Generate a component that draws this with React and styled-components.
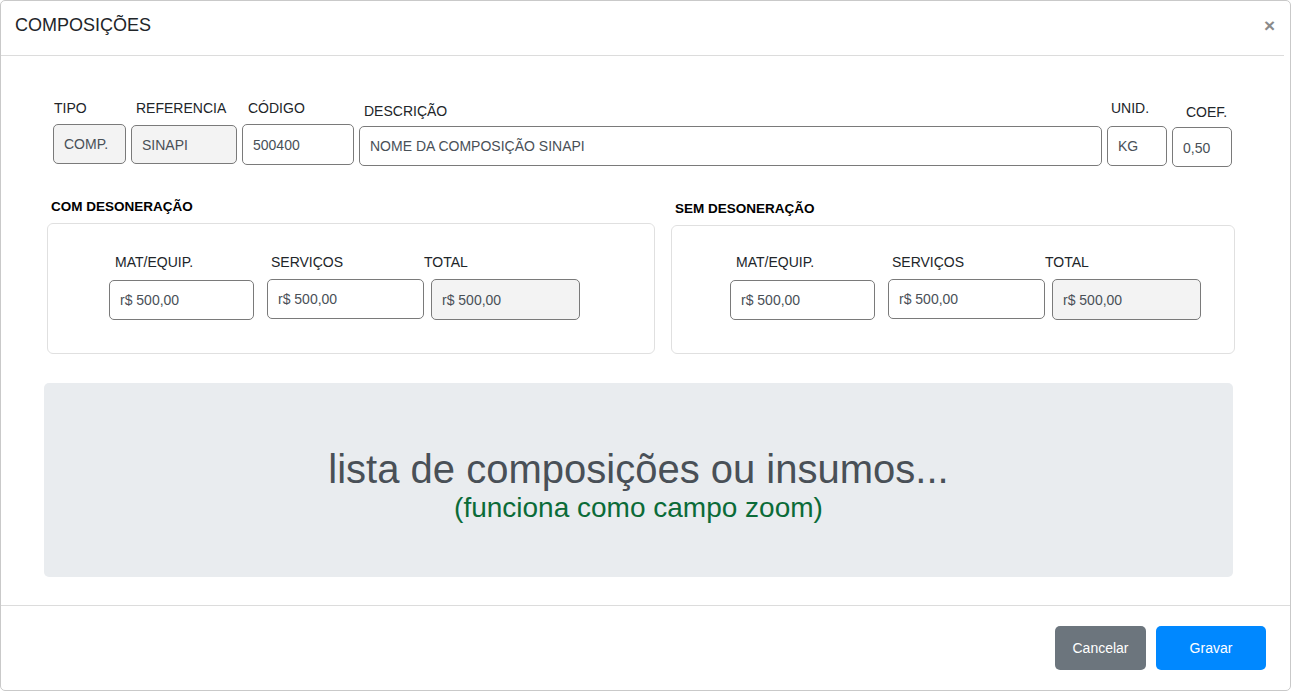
import React from 'react'
import styled, {createGlobalStyle} from 'styled-components'

const GlobalStyle = createGlobalStyle`
    * { box-sizing: border-box; }
    body {
        margin: 0;
        background: #fff;
        font-family: "Liberation Sans", Arial, sans-serif;
        color: #212529;
    }
`

const fields = [
    {label: 'TIPO', value: 'COMP.', width: 73, indent: 1, labelTop: 0, inputTop: 8, height: 40, readOnly: true},
    {label: 'REFERENCIA', value: 'SINAPI', width: 106, indent: 5, labelTop: 0, inputTop: 9, height: 39, readOnly: true},
    {label: 'CÓDIGO', value: '500400', width: 112, indent: 6, labelTop: 0, inputTop: 8, height: 41},
    {label: 'DESCRIÇÃO', value: 'NOME DA COMPOSIÇÃO SINAPI', width: 743, indent: 5, labelTop: 3, inputTop: 7, height: 40},
    {label: 'UNID.', value: 'KG', width: 60, indent: 4, labelTop: 0, inputTop: 10, height: 40},
    {label: 'COEF.', value: '0,50', width: 60, indent: 14, labelTop: 4, inputTop: 7, height: 40, textDrop: 2},
]

const costCols = [
    {label: 'MAT/EQUIP.', width: 145, indent: 6, inputTop: 10},
    {label: 'SERVIÇOS', width: 157, indent: 4, inputTop: 9},
    {label: 'TOTAL', width: 149, indent: -7, inputTop: 9, readOnly: true},
]

const sections = [
    {title: 'COM DESONERAÇÃO', width: 608, shift: 0, height: 131, padTop: 30, padLeft: 61},
    {title: 'SEM DESONERAÇÃO', width: 564, shift: 2, height: 129, padTop: 28, padLeft: 58},
]

export default function App() {
    return (
        <>
            <GlobalStyle />
            <Modal>
                <Header>
                    <Title>COMPOSIÇÕES</Title>
                    <Close aria-label="fechar">×</Close>
                </Header>

                <Body>
                    <FieldRow>
                        {fields.map((f) => (
                            <Field key={f.label} $width={f.width}>
                                <Label $indent={f.indent} $top={f.labelTop}>{f.label}</Label>
                                <Input
                                    $top={f.inputTop}
                                    $height={f.height}
                                    $drop={f.textDrop || 0}
                                    readOnly
                                    $gray={f.readOnly}
                                    defaultValue={f.value}
                                />
                            </Field>
                        ))}
                    </FieldRow>

                    <SectionRow>
                        {sections.map((s) => (
                            <Section key={s.title} $width={s.width} $shift={s.shift}>
                                <SectionTitle>{s.title}</SectionTitle>
                                <Card $height={s.height} $padTop={s.padTop} $padLeft={s.padLeft}>
                                    {costCols.map((c) => (
                                        <CostField key={c.label} $width={c.width}>
                                            <Label $indent={c.indent}>{c.label}</Label>
                                            <Input
                                                $top={c.inputTop}
                                                $height={c.readOnly ? 41 : 40}
                                                $gray={c.readOnly}
                                                readOnly
                                                defaultValue="r$ 500,00"
                                            />
                                        </CostField>
                                    ))}
                                </Card>
                            </Section>
                        ))}
                    </SectionRow>

                    <ZoomPanel>
                        <ZoomTitle>lista de composições ou insumos...</ZoomTitle>
                        <ZoomHint>(funciona como campo zoom)</ZoomHint>
                    </ZoomPanel>
                </Body>

                <Footer>
                    <Button $variant="secondary">Cancelar</Button>
                    <Button $variant="primary">Gravar</Button>
                </Footer>
            </Modal>
        </>
    )
}

const Modal = styled.div`
    width: 1291px;
    height: 691px;
    border: 1px solid #c9c9c9;
    border-radius: 5px;
    display: flex;
    flex-direction: column;
    overflow: hidden;
    background: #fff;
`

const Header = styled.div`
    display: flex;
    align-items: flex-start;
    justify-content: space-between;
    padding: 14px 9px 19px 14px;
    margin-right: 6px;
    border-bottom: 1px solid #dcdcdc;
`

const Title = styled.h5`
    margin: 0;
    font-size: 18px;
    line-height: 21px;
    font-weight: 400;
    color: #212529;
`

const Close = styled.button`
    border: 0;
    background: transparent;
    padding: 0;
    font-family: "Liberation Sans", Arial, sans-serif;
    font-size: 19px;
    line-height: 21px;
    font-weight: 700;
    color: #8a8a8a;
    cursor: pointer;
`

const Body = styled.div`
    flex: 1;
    padding: 44px 0 28px 43px;
`

const FieldRow = styled.div`
    display: flex;
    align-items: flex-start;
    gap: 5px;
    margin-left: 9px;
`

const Field = styled.div`
    display: flex;
    flex-direction: column;
    width: ${({$width}) => $width}px;
`

const Label = styled.label`
    display: block;
    margin-left: ${({$indent}) => $indent || 0}px;
    margin-top: ${({$top}) => $top || 0}px;
    font-size: 14px;
    line-height: 16px;
    color: #212529;
    white-space: nowrap;
`

const Input = styled.input`
    width: 100%;
    height: ${({$height}) => $height}px;
    margin-top: ${({$top}) => $top}px;
    padding: ${({$drop}) => $drop || 0}px 10px 0 10px;
    border: 1px solid #7a7a7a;
    border-radius: 5px;
    background: ${({$gray}) => $gray ? '#f3f3f3' : '#fff'};
    font-family: "Liberation Sans", Arial, sans-serif;
    font-size: 14px;
    color: #495057;
    outline: none;
`

const SectionRow = styled.div`
    display: flex;
    align-items: flex-start;
    gap: 16px;
    margin: 32px 0 0 3px;
`

const Section = styled.div`
    width: ${({$width}) => $width}px;
    margin-top: ${({$shift}) => $shift}px;
`

const SectionTitle = styled.h6`
    margin: 0 0 8px 4px;
    font-size: 13.5px;
    line-height: 16px;
    font-weight: 700;
    color: #000;
`

const Card = styled.div`
    display: flex;
    align-items: flex-start;
    height: ${({$height}) => $height}px;
    padding: ${({$padTop}) => $padTop}px 0 0 ${({$padLeft}) => $padLeft}px;
    border: 1px solid #e0e0e0;
    border-radius: 6px;
    & > * + * { margin-left: 13px; }
    & > *:last-child { margin-left: 7px; }
`

const CostField = styled.div`
    display: flex;
    flex-direction: column;
    width: ${({$width}) => $width}px;
`

const ZoomPanel = styled.div`
    width: 1189px;
    height: 194px;
    margin-top: 29px;
    padding-top: 63px;
    border-radius: 5px;
    background: #e9ecef;
    text-align: center;
`

const ZoomTitle = styled.div`
    font-size: 40px;
    line-height: 46px;
    color: #495057;
`

const ZoomHint = styled.div`
    font-size: 28px;
    line-height: 32px;
    color: #0b6b38;
`

const Footer = styled.div`
    display: flex;
    justify-content: flex-end;
    gap: 10px;
    padding: 20px 24px 20px 0;
    border-top: 1px solid #dcdcdc;
`

const Button = styled.button`
    height: 44px;
    padding: 0;
    width: ${({$variant}) => $variant === 'primary' ? 110 : 91}px;
    border: 0;
    border-radius: 5px;
    background: ${({$variant}) => $variant === 'primary' ? '#0088ff' : '#6c757d'};
    color: #fff;
    font-family: "Liberation Sans", Arial, sans-serif;
    font-size: 14px;
    cursor: pointer;
`
